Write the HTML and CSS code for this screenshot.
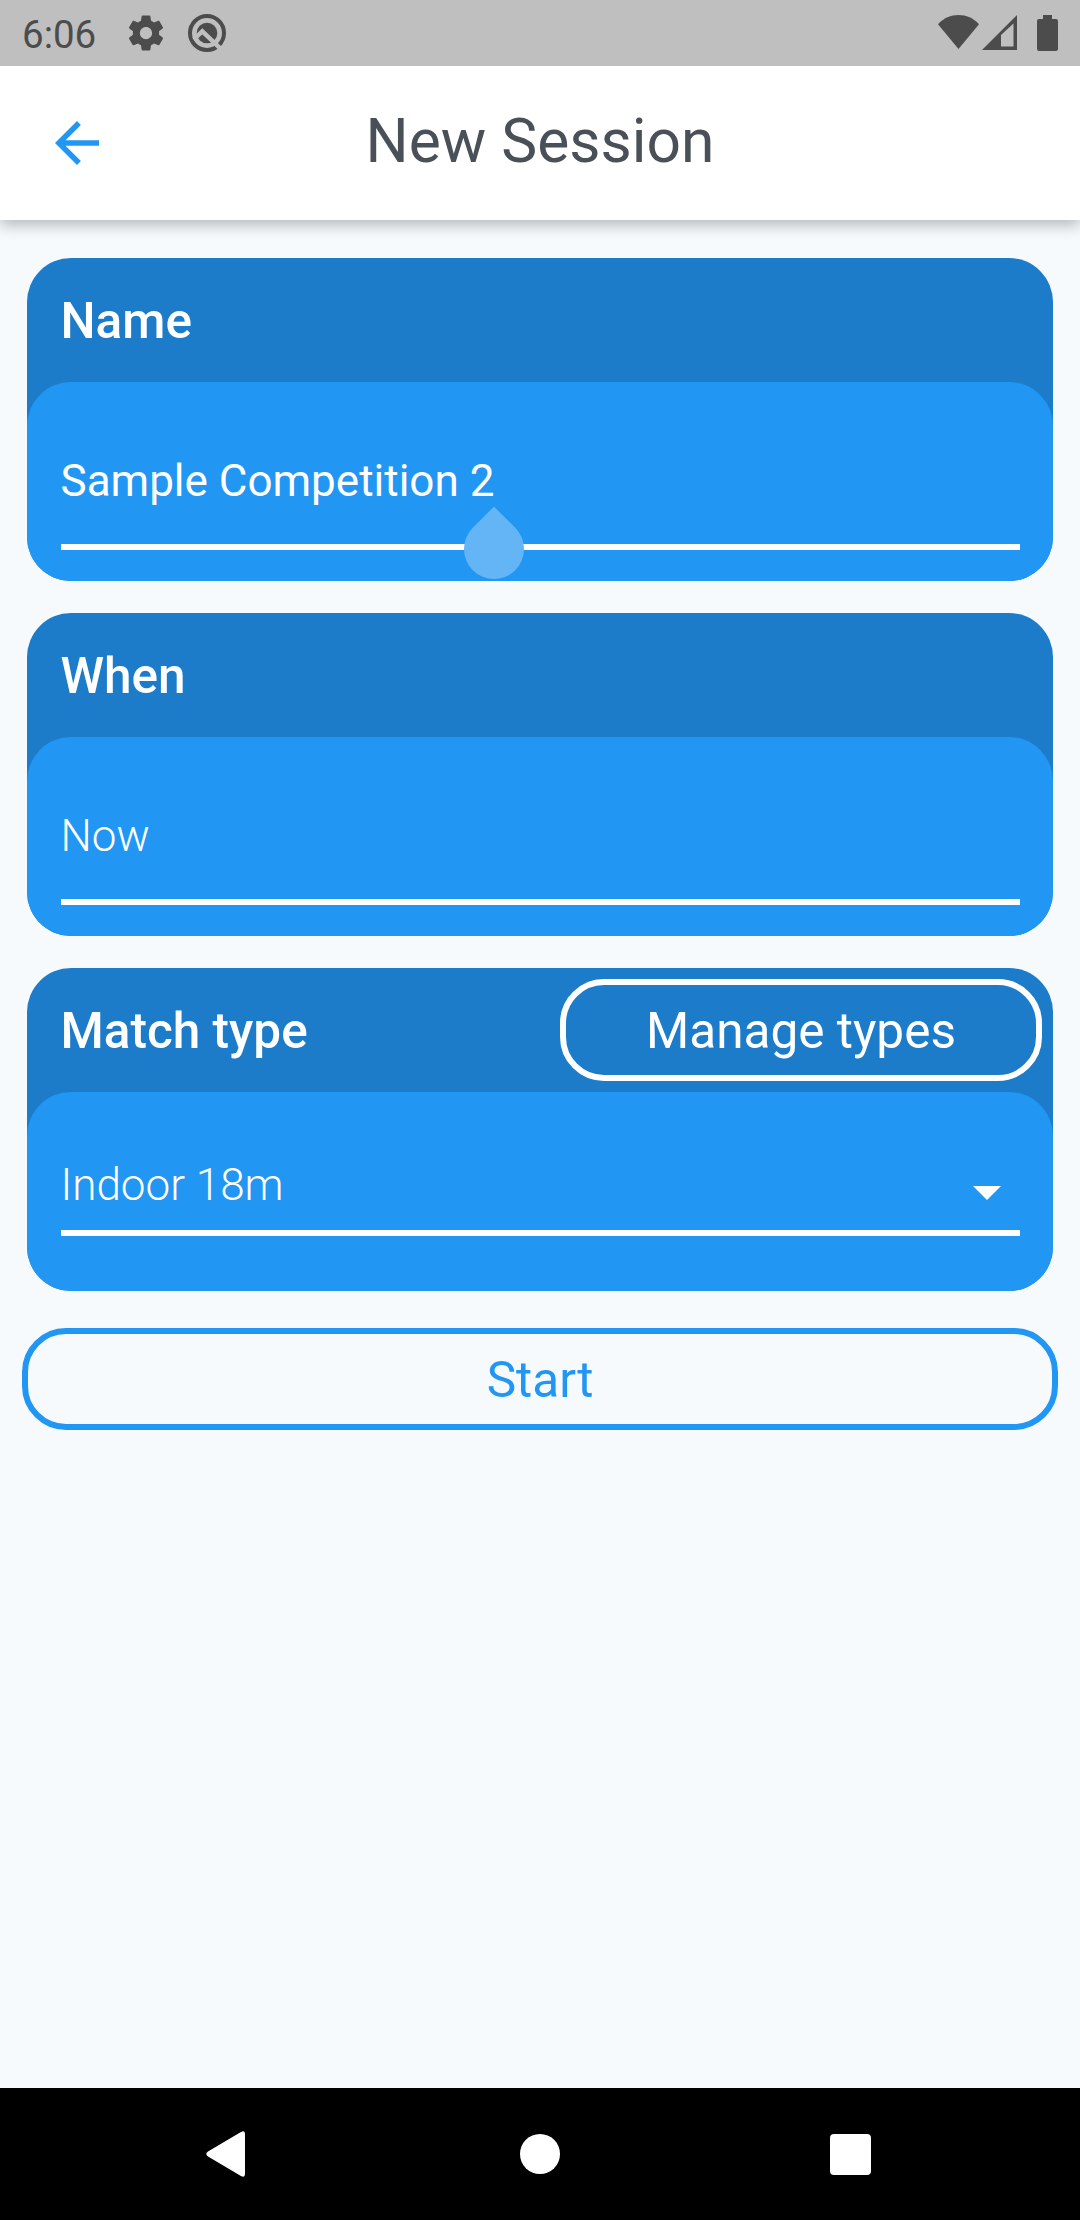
FILE: index.html
```html
<!DOCTYPE html>
<html lang="en">
<head>
<meta charset="utf-8">
<title>New Session</title>
<link rel="stylesheet" href="styles.css">
</head>
<body>
<div class="screen">
  <div class="status-bar">
    <span class="clock">6:06</span>
    <svg class="icon-gear" viewBox="0 0 24 24"><path d="M19.43 12.98c.04-.32.07-.64.07-.98s-.03-.66-.07-.98l2.11-1.65c.19-.15.24-.42.12-.64l-2-3.46c-.12-.22-.39-.3-.61-.22l-2.49 1c-.52-.4-1.08-.73-1.69-.98l-.38-2.65C14.46 2.18 14.25 2 14 2h-4c-.25 0-.46.18-.49.42l-.38 2.65c-.61.25-1.17.59-1.69.98l-2.49-1c-.23-.09-.49 0-.61.22l-2 3.46c-.13.22-.07.49.12.64l2.11 1.65c-.04.32-.07.65-.07.98s.03.66.07.98l-2.11 1.65c-.19.15-.24.42-.12.64l2 3.46c.12.22.39.3.61.22l2.49-1c.52.4 1.08.73 1.69.98l.38 2.65c.03.24.24.42.49.42h4c.25 0 .46-.18.49-.42l.38-2.65c.61-.25 1.17-.59 1.69-.98l2.49 1c.23.09.49 0 .61-.22l2-3.46c.12-.22.07-.49-.12-.64l-2.11-1.65zM12 15.5c-1.93 0-3.5-1.57-3.5-3.5s1.570-3.500 3.500-3.500 3.500 1.570 3.500 3.500-1.570 3.500-3.500 3.500z"/></svg>
    <svg class="icon-q" viewBox="0 0 120 120">
      <circle class="q-ring" cx="60" cy="60" r="51"/>
      <circle cx="60" cy="60" r="31"/>
      <path class="q-cut" d="M20 79L46 55L106 112"/>
    </svg>
    <div class="signals">
      <svg class="icon-wifi" viewBox="0 0 41 34"><path d="M0 9.300C11-3 30-3 41 9.300L20.500 34z"/></svg>
      <svg class="icon-cell" viewBox="0 0 35 35"><path fill-rule="evenodd" d="M35 0V35H0zM19 20V31.500H31.500V8.500z"/></svg>
      <svg class="icon-battery" viewBox="0 0 21 36"><path d="M6 0h9v4h4a2 2 0 0 1 2 2v28a2 2 0 0 1-2 2H2a2 2 0 0 1-2-2V6a2 2 0 0 1 2-2h4z"/></svg>
    </div>
  </div>

  <header class="app-bar">
    <svg class="icon-back" viewBox="0 0 24 24"><path d="M20 11H7.830l5.590-5.590L12 4l-8 8 8 8 1.410-1.410L7.830 13H20z"/></svg>
    <h1 class="title">New Session</h1>
  </header>

  <main class="content">
    <section class="card">
      <div class="card-head"><h2 class="label">Name</h2></div>
      <div class="card-body">
        <div class="field">
          <span class="value">Sample Competition 2</span>
          <span class="cursor-handle"></span>
        </div>
      </div>
    </section>
    <section class="card">
      <div class="card-head"><h2 class="label">When</h2></div>
      <div class="card-body">
        <div class="field"><span class="value light">Now</span></div>
      </div>
    </section>
    <section class="card">
      <div class="card-head">
        <h2 class="label">Match type</h2>
        <button class="btn btn-manage">Manage types</button>
      </div>
      <div class="card-body">
        <div class="field select">
          <span class="value light">Indoor 18m</span>
          <svg class="caret" viewBox="0 0 28 14"><path d="M0 0H28L14 14z"/></svg>
        </div>
      </div>
    </section>
    <button class="btn btn-start">Start</button>
  </main>

  <nav class="nav-bar">
    <svg class="nav-back" viewBox="0 0 39 46"><path d="M34.500 1.200Q39-1.500 39 3V43Q39 47.500 34.500 44.800L2 25.500Q-1.500 23 2 20.500z"/></svg>
    <span class="nav-home"></span>
    <span class="nav-recent"></span>
  </nav>
</div>
</body>
</html>
```

FILE: styles.css
```css
* {
  box-sizing: border-box;
}

body {
  margin: 0;
  font-family: Roboto, sans-serif;
}

.screen {
  display: flex;
  flex-direction: column;
  width: 1080px;
  height: 2220px;
  overflow: hidden;
  background: #f6fafd;
}

svg {
  display: block;
  flex: none;
}

h1,
h2 {
  margin: 0;
}

/* Status bar */
.status-bar {
  display: flex;
  align-items: center;
  flex: none;
  z-index: 1;
  height: 66px;
  padding: 0 22px;
  background: #bfbfbf;
  color: #4c4c4c;
  fill: #4c4c4c;
}

.clock {
  width: 103px;
  padding-top: 3px;
  font-size: 38.5px;
  line-height: 60px;
}

.icon-gear {
  width: 42px;
  height: 42px;
}

.icon-q {
  width: 40px;
  height: 40px;
  margin-left: 20px;
}

.q-ring {
  fill: none;
  stroke: #4c4c4c;
  stroke-width: 12;
}

.q-cut {
  fill: none;
  stroke: #bfbfbf;
  stroke-width: 13;
}

.signals {
  display: flex;
  margin-left: auto;
}

.icon-wifi {
  width: 41px;
  height: 34px;
}

.icon-cell {
  width: 35px;
  height: 35px;
  margin-left: 3px;
}

.icon-battery {
  width: 21px;
  height: 36px;
  margin-left: 20px;
}

/* App bar */
.app-bar {
  display: grid;
  grid-template-columns: 66px 1fr 66px;
  align-items: center;
  flex: none;
  height: 154px;
  padding: 0 44px;
  background: #fff;
  box-shadow: 0 5px 14px rgba(0, 0, 0, 0.27);
}

.icon-back {
  width: 66px;
  height: 66px;
  fill: #2196f3;
}

.title {
  padding-bottom: 2px;
  color: #495057;
  font-size: 60.5px;
  font-weight: 400;
  line-height: 72px;
  text-align: center;
}

/* Form */
.content {
  display: flex;
  flex-direction: column;
  flex: 1;
  gap: 32px;
  padding: 38px 22px 0;
}

.card {
  height: 323px;
  margin: 0 5px;
  border-radius: 44px;
  background: #1c7cca;
  color: #fff;
}

.card-head {
  display: flex;
  align-items: center;
  justify-content: space-between;
  height: 124px;
  padding: 0 11px 0 33.5px;
}

.label {
  padding-top: 2px;
  font-size: 49.5px;
  font-weight: 500;
  line-height: 60px;
}

.card-body {
  height: 199px;
  padding: 69px 33.5px 0;
  border-radius: 44px;
  background: #2196f3;
}

.field {
  position: relative;
  display: flex;
  align-items: flex-start;
  justify-content: space-between;
  height: 99px;
  border-bottom: 6px solid #fff;
}

.value {
  font-size: 44px;
  line-height: 60px;
}

.light {
  font-weight: 300;
}

.select {
  height: 81px;
  margin-top: -6.5px;
}

.caret {
  width: 28px;
  height: 14px;
  margin: 31px 19px 0 0;
  fill: #fff;
}

.cursor-handle {
  position: absolute;
  left: 403.5px;
  top: 68px;
  width: 60px;
  height: 60px;
  border-radius: 0 50% 50% 50%;
  background: #64b5f6;
  transform: rotate(45deg);
}

.btn {
  height: 102px;
  padding: 2px 0 0;
  border: 6px solid currentColor;
  border-radius: 44px;
  background: none;
  font: 400 49.5px/60px Roboto, sans-serif;
}

.btn-manage {
  width: 482px;
  color: #fff;
}

.btn-start {
  margin-top: 5px;
  color: #2196f3;
}

/* System navigation */
.nav-bar {
  display: flex;
  align-items: center;
  justify-content: space-between;
  flex: none;
  height: 132px;
  padding: 0 209px 0 206px;
  background: #000;
}

.nav-back {
  width: 39px;
  height: 46px;
  fill: #fff;
}

.nav-home {
  width: 40px;
  height: 40px;
  margin-left: 5px;
  border-radius: 50%;
  background: #fff;
}

.nav-recent {
  width: 41px;
  height: 41px;
  border-radius: 4px;
  background: #fff;
}
```
